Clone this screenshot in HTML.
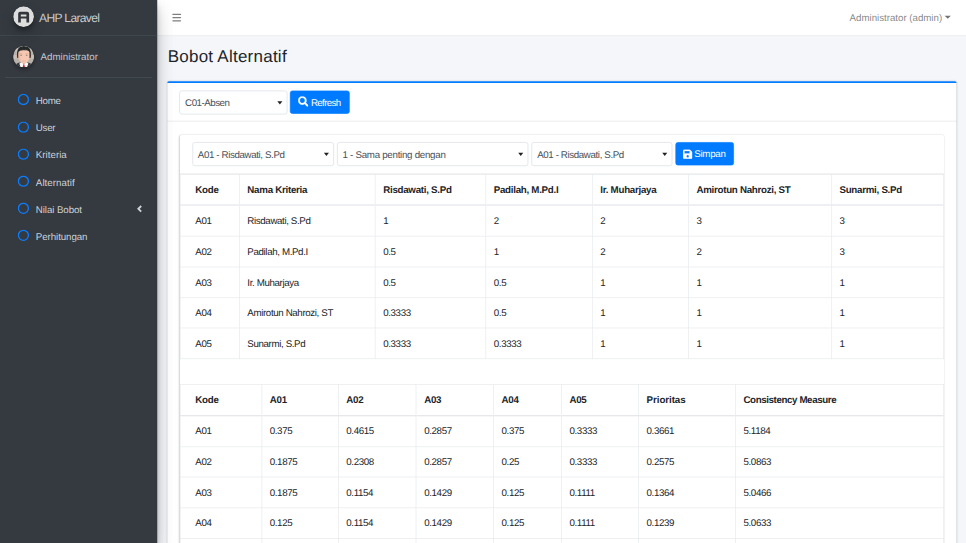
<!DOCTYPE html>
<html lang="id">
<head>
<meta charset="utf-8">
<title>Bobot Alternatif - AHP Laravel</title>
<style>
*,*::before,*::after{box-sizing:border-box}
html,body{margin:0;padding:0;width:966px;height:543px;overflow:hidden;background:#f4f6f9}
body{font-family:"Liberation Sans",sans-serif;font-size:15.5px;line-height:24px;color:#212529;letter-spacing:-0.44px;text-rendering:geometricPrecision}
#stage{position:absolute;left:0;top:0;width:1536px;height:864px;transform-origin:0 0;transform:scale(0.62890625);overflow:hidden;background:#f4f6f9}

/* ---------- sidebar ---------- */
.main-sidebar{position:absolute;left:0;top:0;width:250px;height:864px;background:#343a40;z-index:20;
  box-shadow:0 14px 28px rgba(0,0,0,.25),0 10px 10px rgba(0,0,0,.22)}
.brand-link{display:block;height:57px;padding:13px 8px;border-bottom:1px solid #475057;color:rgba(255,255,255,.74);
  font-size:19.2px;font-weight:300;line-height:30px;letter-spacing:-1.04px;white-space:nowrap;text-decoration:none;position:relative}
.brand-image{position:absolute;left:21px;top:10px;width:33px;height:33px;border-radius:50%;
  box-shadow:0 10px 20px rgba(0,0,0,.19),0 6px 6px rgba(0,0,0,.23)}
.brand-text{position:absolute;left:62px;top:14.7px}
.sidebar{padding:0 8px}
.user-panel{position:relative;margin-top:16px;height:50.6px;border-bottom:1px solid #4a545c;margin-bottom:16px}
.user-panel .image{position:absolute;left:12.8px;top:0;width:33.6px;height:33.6px;border-radius:50%;overflow:hidden;
  box-shadow:0 3px 6px rgba(0,0,0,.16),0 3px 6px rgba(0,0,0,.23)}
.user-panel .info{position:absolute;left:56.4px;top:5.9px;color:#c2c7d0;line-height:24px;white-space:nowrap;letter-spacing:0.00px}
.nav-sidebar{list-style:none;margin:0;padding:0}
.nav-sidebar li{height:40px;margin-bottom:3.2px;position:relative;color:#ccd1d9;white-space:nowrap}
.nav-sidebar .nav-icon{position:absolute;left:20.2px;top:9.9px;width:18.4px;height:18.4px}
.nav-sidebar p{position:absolute;left:49px;top:9.4px;margin:0;line-height:24px}
.nav-sidebar .right{position:absolute;right:16px;top:12px;width:9px;height:16px}

/* ---------- navbar ---------- */
.main-header{position:absolute;left:250px;top:0;width:1286px;height:56.8px;background:#fff;border-bottom:1px solid #e4e7eb;z-index:10}
.bars{position:absolute;left:24px;top:21.6px;width:14px;height:12px}
.bars i{display:block;height:2px;background:#7f7f7f;margin-bottom:3px;border-radius:1px}
.user-menu{position:absolute;right:24px;top:17.8px;line-height:24px;color:rgba(0,0,0,.5);white-space:nowrap;letter-spacing:-0.05px}
.user-menu .caret{display:inline-block;width:0;height:0;margin-left:4px;vertical-align:4.2px;border-top:5px solid rgba(0,0,0,.55);border-left:5px solid transparent;border-right:5px solid transparent}

/* ---------- content ---------- */
.content-wrapper{position:absolute;left:250px;top:56.8px;width:1286px;height:807px;background:#f4f6f9}
.content-header{padding:15px 8px}
.content-header h1{margin:0 0 8px 8.6px;font-size:27px;line-height:34.56px;font-weight:400;letter-spacing:0.4px;position:relative;top:1.2px;color:#212529;white-space:nowrap}
.content{padding:0 15.5px}
.card{background:#fff;border-radius:4px;box-shadow:0 0 1px rgba(0,0,0,.125),0 1px 3px rgba(0,0,0,.2);margin-bottom:16px;position:relative}
.card-outline{padding-top:2.4px}
.card-outline::before{content:"";position:absolute;left:0;right:0;top:0;height:2.4px;background:#007bff;border-radius:4px 4px 0 0}
.card-header{padding:12px 20px 11.8px;border-bottom:1px solid rgba(0,0,0,.1);white-space:nowrap;font-size:0}
.card-header>*{font-size:15.5px}
.card-body{padding:20px}
.card-body.p-0{padding:0}

.sel{display:inline-block;vertical-align:middle;height:38px;border:1px solid #d6dbe0;border-radius:4px;background:#fff;color:#495057;
  padding:7.8px 8px 4.2px;line-height:24px;position:relative;margin-right:4.5px;overflow:hidden;white-space:nowrap}
.sel::after{content:"";position:absolute;right:7px;top:16px;border-top:5.5px solid #222;border-left:4.6px solid transparent;border-right:4.6px solid transparent}
.btn{display:inline-block;vertical-align:middle;position:relative;top:-.4px;height:37.5px;border:1px solid #007bff;border-radius:4px;background:#007bff;color:#fff;
  padding:7.4px 12px 4.1px;line-height:24px;box-shadow:none;white-space:nowrap;overflow:hidden}
.btn svg{width:16.5px;height:16.5px;vertical-align:-3.2px;fill:#fff;stroke:#fff;stroke-width:14;margin-right:4px}

table{width:100%;border-collapse:collapse;table-layout:fixed;margin:0 0 16px 0;color:#212529;background:transparent}
th,td{border:1px solid #e4e7eb;padding:12.6px 12px 11.15px;text-align:left;vertical-align:top;line-height:24px;white-space:nowrap;overflow:hidden;font-weight:400}
tbody td{letter-spacing:-0.60px;padding-top:12.6px;padding-bottom:11.15px}
thead th{font-weight:700;border-bottom-width:2px;vertical-align:bottom;padding-top:13.3px;padding-bottom:10.45px}
th:first-child,td:first-child{padding-left:24px}
th:last-child,td:last-child{padding-right:24px}
</style>
</head>
<body>
<div id="stage">

<aside class="main-sidebar">
  <a class="brand-link">
    <svg class="brand-image" viewBox="0 0 33 33"><circle cx="16.5" cy="16.5" r="16.5" fill="#dddddd"/><path d="M11 8.800h11.200a3.100 3.100 0 0 1 3.100 3.100v13.800h-4.300v-6.100h-8.900v6.100h-4.200v-13.800a3.100 3.100 0 0 1 3.100-3.100zm1.100 4.100v3.400h8.900v-3.400z" fill="#32363b"/></svg>
    <span class="brand-text">AHP Laravel</span>
  </a>
  <div class="sidebar">
    <div class="user-panel">
      <div class="image">
        <svg viewBox="0 0 34 34" width="33.6" height="33.6"><rect width="34" height="34" fill="#b7b2aa"/><path d="M17 17L0 6V0h5zM17 17L12 0h10zM17 17L29 0h5v6zM17 17L0 22v-8zM17 17L34 14v8z" fill="#c6c2bb"/><path d="M2 34c.8-4.500 4-6 9-7.200h12c5 1.200 8.200 2.700 9 7.200z" fill="#33363b"/><rect x="13.300" y="23" width="7.600" height="7" fill="#e6ad92"/><path d="M9.800 28.200l3.600-2.400 3.700 5 3.700-5 3.600 2.400-2 5.800h-10.600z" fill="#fbfbfb"/><path d="M16.100 30.300h2l.7 3.700h-3.400z" fill="#e0202a"/><ellipse cx="6.500" cy="16.400" rx="1.300" ry="2.300" fill="#e3a385"/><ellipse cx="28.100" cy="16.400" rx="1.300" ry="2.300" fill="#e3a385"/><path d="M6.600 19.500C5 8 7.500.3 17.300.3S29.600 8 28 19.500z" fill="#26292a"/><path d="M8.400 10.500c0-3 2.200-4.700 8.900-4.700s8.900 1.700 8.900 4.700v7.800c0 4.800-4.200 9.400-8.900 9.400s-8.900-4.600-8.900-9.400z" fill="#f6c8b3"/><path d="M8.400 11.500v6.800c0 4.800 4.200 9.400 8.900 9.400-3.600-1.600-5.900-5-5.900-9.400v-9.800c-1.900.6-3 1.500-3 3z" fill="#efb39c" opacity=".7"/><path transform="translate(0 -1.400)" d="M8 12.500c.2-4 1-6.500 2.600-7.700l1.600 2.600 1.700-3.100 1.900 3.100 2-3.300 1.900 3.300 1.900-3.100 1.700 3.100 1.500-2.600c1.500 1.200 2.200 3.700 2.400 7.700-1.500-2.800-3.500-4-9.800-4s-7.900 1.200-9.400 4z" fill="#26292a"/><rect x="10.700" y="12.500" width="4" height=".9" fill="#d98e6c"/><rect x="19.700" y="12.500" width="4" height=".9" fill="#d98e6c"/><ellipse cx="12.700" cy="14.900" rx="1.500" ry=".75" fill="#6b6a62"/><ellipse cx="21.700" cy="14.900" rx="1.500" ry=".75" fill="#6b6a62"/><rect x="14.600" y="23.700" width="5.400" height=".8" rx=".4" fill="#e39f88"/></svg>
      </div>
      <div class="info">Administrator</div>
    </div>
    <ul class="nav-sidebar">
      <li><svg class="nav-icon" viewBox="0 0 18.4 18.4"><circle cx="9.2" cy="9.2" r="8" fill="none" stroke="#0a7dff" stroke-width="2.100"/></svg><p>Home</p></li>
      <li><svg class="nav-icon" viewBox="0 0 18.4 18.4"><circle cx="9.2" cy="9.2" r="8" fill="none" stroke="#0a7dff" stroke-width="2.100"/></svg><p>User</p></li>
      <li><svg class="nav-icon" viewBox="0 0 18.4 18.4"><circle cx="9.2" cy="9.2" r="8" fill="none" stroke="#0a7dff" stroke-width="2.100"/></svg><p style="letter-spacing:0.00px">Kriteria</p></li>
      <li><svg class="nav-icon" viewBox="0 0 18.4 18.4"><circle cx="9.2" cy="9.2" r="8" fill="none" stroke="#0a7dff" stroke-width="2.100"/></svg><p style="letter-spacing:0.05px">Alternatif</p></li>
      <li><svg class="nav-icon" viewBox="0 0 18.4 18.4"><circle cx="9.2" cy="9.2" r="8" fill="none" stroke="#0a7dff" stroke-width="2.100"/></svg><p style="letter-spacing:-0.15px">Nilai Bobot</p><svg class="right" viewBox="0 0 9 16"><path d="M7.500 3.500L3 8l4.500 4.500" fill="none" stroke="#ccd1d9" stroke-width="3"/></svg></li>
      <li><svg class="nav-icon" viewBox="0 0 18.4 18.4"><circle cx="9.2" cy="9.2" r="8" fill="none" stroke="#0a7dff" stroke-width="2.100"/></svg><p style="letter-spacing:-0.14px">Perhitungan</p></li>
    </ul>
  </div>
</aside>

<nav class="main-header">
  <div class="bars"><i></i><i></i><i></i></div>
  <div class="user-menu">Administrator (admin)<span class="caret"></span></div>
</nav>

<div class="content-wrapper">
  <div class="content-header"><h1>Bobot Alternatif</h1></div>
  <section class="content">
    <div class="card card-outline">
      <div class="card-header" style="padding-bottom:10.6px">
        <span class="sel" style="width:172px;letter-spacing:-0.79px;margin-left:-.2px;margin-right:3.5px">C01-Absen</span><span class="btn" style="width:95.2px"><svg viewBox="0 0 512 512" style="vertical-align:-1.9px"><path d="M505 442.700L405.300 343c-4.500-4.500-10.600-7-17-7H372c27.600-35.300 44-79.700 44-128C416 93.100 322.900 0 208 0S0 93.100 0 208s93.100 208 208 208c48.300 0 92.700-16.400 128-44v16.300c0 6.400 2.500 12.500 7 17l99.700 99.700c9.400 9.400 24.600 9.400 33.900 0l28.300-28.300c9.400-9.400 9.400-24.600.1-34zM208 336c-70.700 0-128-57.200-128-128 0-70.700 57.200-128 128-128 70.700 0 128 57.200 128 128 0 70.700-57.200 128-128 128z"/></svg><span style="letter-spacing:-1.0px">Refresh</span></span>
      </div>
      <div class="card-body" style="padding-top:20.6px">
        <div class="card" id="inner">
          <div class="card-header">
            <span class="sel" style="width:225px;margin-right:5px;letter-spacing:-0.61px">A01 - Risdawati, S.Pd</span><span class="sel" style="width:304.4px;margin-right:5.2px">1 - Sama penting dengan</span><span class="sel" style="width:224px;letter-spacing:-0.61px">A01 - Risdawati, S.Pd</span><span class="btn" style="width:93.8px"><svg viewBox="0 0 448 512" style="width:15px;margin-left:-1px;margin-right:3.3px"><path d="M433.941 129.941l-83.882-83.882A48 48 0 0 0 316.118 32H48C21.490 32 0 53.490 0 80v352c0 26.510 21.490 48 48 48h352c26.510 0 48-21.490 48-48V163.882a48 48 0 0 0-14.059-33.941zM224 416c-35.346 0-64-28.654-64-64 0-35.346 28.654-64 64-64s64 28.654 64 64c0 35.346-28.654 64-64 64zm96-304.520V212c0 6.627-5.373 12-12 12H76c-6.627 0-12-5.373-12-12V108c0-6.627 5.373-12 12-12h228.520c3.183 0 6.235 1.264 8.485 3.515l3.480 3.480A11.996 11.996 0 0 1 320 111.480z"/></svg>Simpan</span>
          </div>
          <div class="card-body p-0">
            <table id="t1">
              <colgroup><col style="width:94.800px"><col style="width:216px"><col style="width:175.800px"><col style="width:169.500px"><col style="width:152.700px"><col style="width:227.500px"><col></colgroup>
              <thead><tr><th>Kode</th><th>Nama Kriteria</th><th>Risdawati, S.Pd</th><th>Padilah, M.Pd.I</th><th>Ir. Muharjaya</th><th>Amirotun Nahrozi, ST</th><th>Sunarmi, S.Pd</th></tr></thead>
              <tbody>
                <tr><td>A01</td><td>Risdawati, S.Pd</td><td>1</td><td>2</td><td>2</td><td>3</td><td>3</td></tr>
                <tr><td>A02</td><td>Padilah, M.Pd.I</td><td>0.5</td><td>1</td><td>2</td><td>2</td><td>3</td></tr>
                <tr><td>A03</td><td>Ir. Muharjaya</td><td>0.5</td><td>0.5</td><td>1</td><td>1</td><td>1</td></tr>
                <tr><td>A04</td><td>Amirotun Nahrozi, ST</td><td>0.3333</td><td>0.5</td><td>1</td><td>1</td><td>1</td></tr>
                <tr><td>A05</td><td>Sunarmi, S.Pd</td><td>0.3333</td><td>0.3333</td><td>1</td><td>1</td><td>1</td></tr>
              </tbody>
            </table>
            <div style="height:23.9px"></div>
            <table id="t2">
              <colgroup><col style="width:130.400px"><col style="width:121.800px"><col style="width:123.800px"><col style="width:123px"><col style="width:108px"><col style="width:122.600px"><col style="width:154.100px"><col></colgroup>
              <thead><tr><th>Kode</th><th>A01</th><th>A02</th><th>A03</th><th>A04</th><th>A05</th><th style="letter-spacing:-.1px">Prioritas</th><th style="letter-spacing:-.63px">Consistency Measure</th></tr></thead>
              <tbody>
                <tr><td>A01</td><td>0.375</td><td>0.4615</td><td>0.2857</td><td>0.375</td><td>0.3333</td><td>0.3661</td><td>5.1184</td></tr>
                <tr><td>A02</td><td>0.1875</td><td>0.2308</td><td>0.2857</td><td>0.25</td><td>0.3333</td><td>0.2575</td><td>5.0863</td></tr>
                <tr><td>A03</td><td>0.1875</td><td>0.1154</td><td>0.1429</td><td>0.125</td><td>0.1111</td><td>0.1364</td><td>5.0466</td></tr>
                <tr><td>A04</td><td>0.125</td><td>0.1154</td><td>0.1429</td><td>0.125</td><td>0.1111</td><td>0.1239</td><td>5.0633</td></tr>
                <tr><td>A05</td><td>0.125</td><td>0.0769</td><td>0.1429</td><td>0.125</td><td>0.1111</td><td>0.1161</td><td>5.0391</td></tr>
              </tbody>
            </table>
          </div>
        </div>
      </div>
    </div>
  </section>
</div>

</div>
</body>
</html>
